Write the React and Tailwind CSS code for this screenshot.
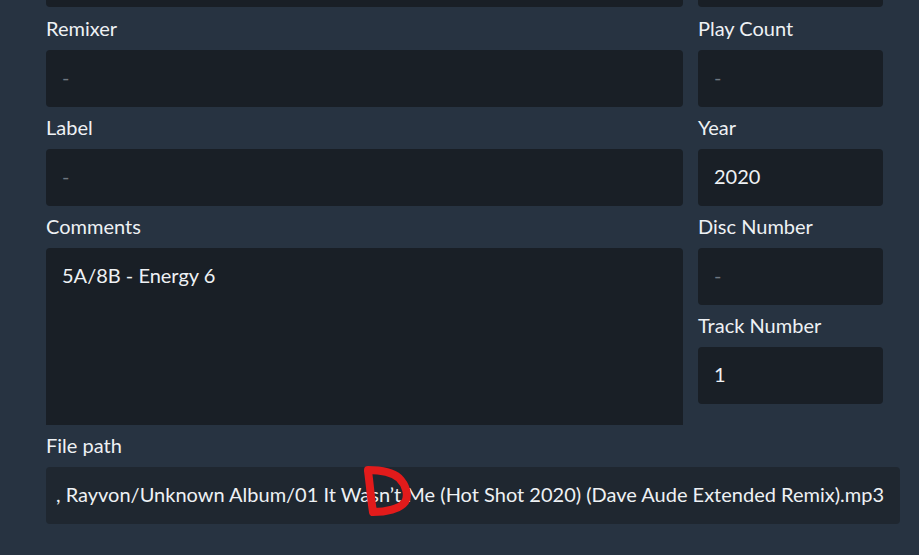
const FONT = { fontFamily: "Lato, 'Open Sans', sans-serif" };

// One labelled field: label row + box
const Field = ({ label, value, labelH = "h-[42px]", className = "w-[185px]" }) => (
  <div className="flex flex-col">
    <div className={`${labelH} flex items-center pb-[2px] text-[20px] text-[#eef1f4]`}>{label}</div>
    <div className={`h-[57px] rounded-[4px] bg-[#191f26] flex items-center px-4 pb-[3px] text-[20px] ${className}`}>
      {value ? (
        <span className="text-[#eef1f4]">{value}</span>
      ) : (
        <span className="text-[#6f7780]">-</span>
      )}
    </div>
  </div>
);

export default function App() {
  return (
    <div className="relative h-[555px] w-[919px] overflow-hidden bg-[#273341] pl-[46px]" style={FONT}>
      {/* tail of the previous row */}
      <div className="flex gap-[15px]">
        <div className="h-[7px] w-[637px] rounded-b-[4px] bg-[#191f26]" />
        <div className="h-[7px] w-[185px] rounded-b-[4px] bg-[#191f26]" />
      </div>

      <div className="flex gap-[15px]">
        {/* left column */}
        <div className="flex flex-col w-[637px]">
          <Field label="Remixer" labelH="h-[43px]" className="w-[637px]" />
          <Field label="Label" className="w-[637px]" />
          <div className="flex flex-col">
            <div className="h-[42px] flex items-center pb-[2px] text-[20px] text-[#eef1f4]">Comments</div>
            <div className="h-[177px] w-[637px] rounded-t-[4px] bg-[#191f26] px-4 pt-[14px] text-[20px] leading-[26px] text-[#eef1f4]">
              5A/8B - Energy 6
            </div>
          </div>
        </div>

        {/* right column */}
        <div className="flex flex-col w-[185px]">
          <Field label="Play Count" labelH="h-[43px]" />
          <Field label="Year" value="2020" />
          <Field label="Disc Number" />
          <Field label="Track Number" value="1" />
        </div>
      </div>

      {/* file path */}
      <div className="flex flex-col">
        <div className="h-[42px] flex items-center pb-[2px] text-[20px] text-[#eef1f4]">File path</div>
        <div className="h-[57px] w-[854px] rounded-[4px] bg-[#1f2730] px-4 pb-[3px] flex items-center justify-end overflow-hidden">
          <span className="whitespace-nowrap text-[20px] text-[#eef1f4]">
            , Rayvon/Unknown Album/01 It Wasn’t Me (Hot Shot 2020) (Dave Aude Extended Remix).mp3
          </span>
        </div>
      </div>

      {/* red hand-drawn mark over the path */}
      <svg className="absolute left-0 top-0 pointer-events-none" width="919" height="555">
        <path
          d="M368 471 C370 485 371 500 373 512 M368 470 C380 470 392 472 399 478 C406 485 409 495 405 502 C400 509 386 512 373 512"
          fill="none"
          stroke="#e21b1b"
          strokeWidth="8"
          strokeLinecap="round"
          strokeLinejoin="round"
        />
      </svg>
    </div>
  );
}
